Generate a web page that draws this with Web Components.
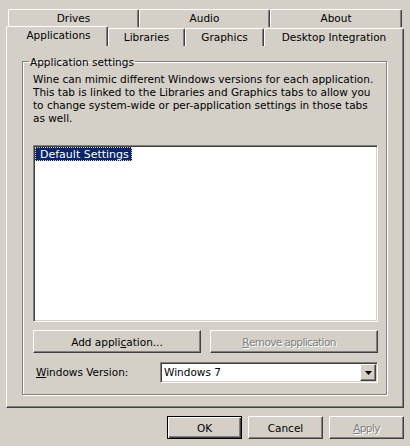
<!DOCTYPE html>
<html>
<head>
<meta charset="utf-8">
<title>Wine configuration</title>
<style>
   html, body {
      margin: 0;
      width: 410px;
      height: 446px;
      overflow: hidden;
      background: #d4d0c8;
      font: 10.5px/13px "DejaVu Sans", sans-serif;
      color: #000;
   }
   label {
      width: 124px;
   }
</style>
</head>
<body>
<wine-dialog>
   <wine-tabs slot="tabs">
      <wine-tab slot="back" style="width:131px">Drives</wine-tab>
      <wine-tab slot="back" style="width:131px">Audio</wine-tab>
      <wine-tab slot="back" style="width:132px">About</wine-tab>
      <wine-tab slot="front" style="width:102px" active>Applications</wine-tab>
      <wine-tab slot="front" style="width:77px">Libraries</wine-tab>
      <wine-tab slot="front" style="width:79px">Graphics</wine-tab>
      <wine-tab slot="front" style="width:140px">Desktop Integration</wine-tab>
   </wine-tabs>

   <wine-group label="Application settings">
      <p>Wine can mimic different Windows versions for each application.<br>This tab is linked to the Libraries and Graphics tabs to allow you<br>to change system-wide or per-application settings in those tabs<br>as well.</p>
      <wine-list><span>Default Settings</span></wine-list>
      <div class="actions">
         <wine-button style="width:168px">Add appli<u>c</u>ation...</wine-button>
         <wine-button style="width:168px;padding-right:10px" disabled><u>R</u>emove application</wine-button>
      </div>
      <div class="version">
         <label><u>W</u>indows Version:</label>
         <wine-combo>Windows 7</wine-combo>
      </div>
   </wine-group>

   <wine-button slot="footer" style="width:75px" default>OK</wine-button>
   <wine-button slot="footer" style="width:75px">Cancel</wine-button>
   <wine-button slot="footer" style="width:75px" disabled><u>A</u>pply</wine-button>
</wine-dialog>

<script>
// Window frame: tabs on top, sheet under them, buttons at the bottom
class WineDialog extends HTMLElement {
   connectedCallback() {
      this.attachShadow({ mode: "open" }).innerHTML = `
         <style>
            :host {
               display: block;
               padding-top: 9px;
            }
            .sheet {
               box-sizing: border-box;
               width: 398px;
               height: 363px;
               margin-left: 6px;
               padding: 8px 0 0 15px;
               border-top: 1px solid #fff;
               border-left: 1px solid #fff;
               border-right: 1px solid #404040;
               border-bottom: 1px solid #404040;
               box-shadow: inset -1px -1px 0 #808080;
            }
            .footer {
               display: flex;
               justify-content: flex-end;
               gap: 6px;
               padding: 8px 6px 0 0;
            }
         </style>
         <slot name="tabs"></slot>
         <div class="sheet"><slot></slot></div>
         <div class="footer"><slot name="footer"></slot></div>
      `;
   }
}

// Two rows of tabs, the front row sits against the sheet
class WineTabs extends HTMLElement {
   connectedCallback() {
      this.attachShadow({ mode: "open" }).innerHTML = `
         <style>
            :host {
               display: block;
               position: relative;
               z-index: 1;
               margin-bottom: -1px;
            }
            .row {
               display: flex;
               align-items: flex-end;
            }
            .back {
               height: 18px;
               padding-left: 8px;
            }
            .front {
               height: 19px;
               padding-left: 6px;
            }
         </style>
         <div class="row back"><slot name="back"></slot></div>
         <div class="row front"><slot name="front"></slot></div>
      `;
   }
}

class WineTab extends HTMLElement {
   connectedCallback() {
      this.attachShadow({ mode: "open" }).innerHTML = `
         <style>
            :host {
               box-sizing: border-box;
               display: flex;
               justify-content: center;
               align-items: center;
               height: 18px;
               border-top: 1px solid #fff;
               border-left: 1px solid #fff;
               border-right: 1px solid #404040;
               border-radius: 2px 2px 0 0;
               box-shadow: inset -1px 0 0 #808080;
               background: #d4d0c8;
               white-space: nowrap;
            }
            :host([active]) {
               height: 20px;
               padding: 0 0 3px 3px;
               position: relative;
            }
         </style>
         <slot></slot>
      `;
   }
}

// Etched box with its caption on the line
class WineGroup extends HTMLElement {
   connectedCallback() {
      const shadow = this.attachShadow({ mode: "open" });
      shadow.innerHTML = `
         <style>
            :host {
               display: block;
               width: 365px;
            }
            fieldset {
               box-sizing: border-box;
               height: 341px;
               margin: 0;
               padding: 0;
               border: 1px solid #808080;
               box-shadow: 1px 1px 0 #fff, inset 1px 1px 0 #fff;
            }
            legend {
               margin-left: 6px;
               padding: 2px 1px 0;
               line-height: 13px;
            }
            .body {
               padding-left: 10px;
            }
            ::slotted(p) {
               margin: 4px 0 0;
               white-space: nowrap;
            }
            ::slotted(.actions) {
               display: flex;
               gap: 9px;
               margin-top: 8px;
            }
            ::slotted(.version) {
               display: flex;
               align-items: center;
               margin-top: 9px;
               padding-left: 3px;
            }
         </style>
         <fieldset>
            <legend></legend>
            <div class="body"><slot></slot></div>
         </fieldset>
      `;
      shadow.querySelector("legend").textContent = this.getAttribute("label");
   }
}

class WineList extends HTMLElement {
   connectedCallback() {
      this.attachShadow({ mode: "open" }).innerHTML = `
         <style>
            :host {
               box-sizing: border-box;
               display: block;
               width: 345px;
               height: 177px;
               margin-top: 20px;
               padding: 1px;
               border-top: 1px solid #808080;
               border-left: 1px solid #808080;
               border-right: 1px solid #fff;
               border-bottom: 1px solid #fff;
               box-shadow: inset 1px 1px 0 #404040, inset -1px -1px 0 #d4d0c8;
               background: #fff;
            }
            ::slotted(span) {
               box-sizing: border-box;
               display: block;
               width: 97px;
               height: 14px;
               padding: 1px 0 0 5px;
               font-size: 11px;
               line-height: 13px;
               color: #fff;
               background: #0a246a;
               outline: 1px dotted #d4d0c8;
               outline-offset: -1px;
            }
         </style>
         <slot></slot>
      `;
   }
}

class WineButton extends HTMLElement {
   connectedCallback() {
      this.attachShadow({ mode: "open" }).innerHTML = `
         <style>
            :host {
               box-sizing: border-box;
               display: flex;
               justify-content: center;
               align-items: center;
               height: 23px;
               padding-top: 1px;
               border-top: 1px solid #fff;
               border-left: 1px solid #fff;
               border-right: 1px solid #404040;
               border-bottom: 1px solid #404040;
               box-shadow: inset -1px -1px 0 #808080;
               white-space: nowrap;
            }
            :host([default]) {
               border: 1px solid #000;
               box-shadow: inset 1px 1px 0 #fff, inset -1px -1px 0 #404040, inset -2px -2px 0 #808080;
            }
            :host([disabled]) {
               color: #808080;
               letter-spacing: -0.6px;
               text-shadow: 1px 1px 0 #fff;
            }
         </style>
         <slot></slot>
      `;
   }
}

class WineCombo extends HTMLElement {
   connectedCallback() {
      this.attachShadow({ mode: "open" }).innerHTML = `
         <style>
            :host {
               box-sizing: border-box;
               display: flex;
               align-items: center;
               justify-content: space-between;
               width: 218px;
               height: 21px;
               padding: 0 1px 0 3px;
               border-top: 1px solid #808080;
               border-left: 1px solid #808080;
               border-right: 1px solid #fff;
               border-bottom: 1px solid #fff;
               box-shadow: inset 1px 1px 0 #404040, inset -1px -1px 0 #d4d0c8;
               background: #fff;
            }
            .arrow {
               box-sizing: border-box;
               display: flex;
               justify-content: center;
               align-items: center;
               width: 16px;
               height: 17px;
               border-top: 1px solid #fff;
               border-left: 1px solid #fff;
               border-right: 1px solid #404040;
               border-bottom: 1px solid #404040;
               box-shadow: inset -1px -1px 0 #808080;
               background: #d4d0c8;
            }
         </style>
         <span><slot></slot></span>
         <div class="arrow">
            <svg width="7" height="4" viewBox="0 0 7 4"><path d="M0 0h7L3.5 4z" fill="#000"/></svg>
         </div>
      `;
   }
}

customElements.define("wine-dialog", WineDialog);
customElements.define("wine-tabs", WineTabs);
customElements.define("wine-tab", WineTab);
customElements.define("wine-group", WineGroup);
customElements.define("wine-list", WineList);
customElements.define("wine-button", WineButton);
customElements.define("wine-combo", WineCombo);
</script>
</body>
</html>
